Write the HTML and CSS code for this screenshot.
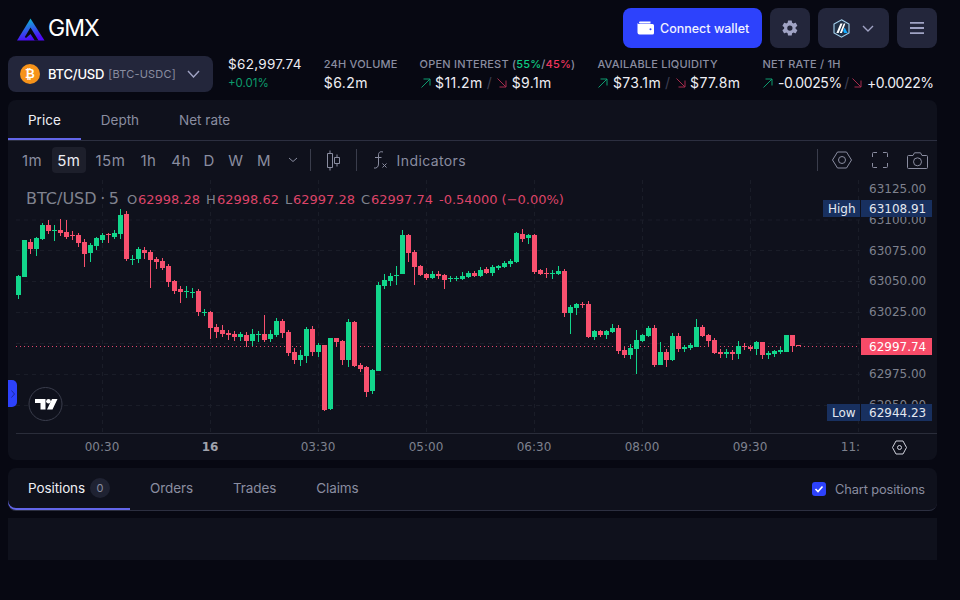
FILE: index.html
```html
<!DOCTYPE html>
<html lang="en">
<head>
<meta charset="UTF-8" />
<meta name="viewport" content="width=device-width, initial-scale=1" />
<title>GMX - BTC/USD</title>
<link rel="stylesheet" href="styles.css">
</head>
<body>

<div class="page">

  <header class="topbar">
    <div class="brand">
      <svg class="brand-logo" width="30" height="24" viewBox="0 0 30 24">
        <defs>
          <linearGradient id="logoFill" x1="0" y1="0" x2="0.3" y2="1">
            <stop offset="0" stop-color="#03d1cf"/>
            <stop offset="1" stop-color="#4e09f8"/>
          </linearGradient>
        </defs>
        <path fill="url(#logoFill)" d="M14.5 1.5 L28.5 23.5 H1 Z"/>
        <path fill="#07080f" d="M14.5 10.5 L22.5 23.5 H18.8 L14.5 17 L10 21 L8.8 20 Z"/>
      </svg>
      <span class="brand-name">GMX</span>
    </div>
    <div class="actions">
      <button class="connect-btn">
        <svg width="18" height="14" viewBox="0 0 18 14"><path fill="#fff" d="M3 0.5 H13.5 V2.5 H3 A1 1 0 0 1 3 0.5Z"/><path fill="#fff" fill-rule="evenodd" d="M2.5 3 H15.5 A1.5 1.5 0 0 1 17 4.5 V12 A1.5 1.5 0 0 1 15.5 13.5 H2.5 A2 2 0 0 1 0.5 11.5 V2 A2 1 0 0 0 2.5 3Z M13.5 7.3 A1 1 0 1 0 13.5 9.3 A1 1 0 1 0 13.5 7.3Z"/></svg>
        Connect wallet
      </button>
      <button class="icon-btn">
        <svg width="18" height="18" viewBox="0 0 24 24"><path fill="#a0a3c4" d="M19.4 13c.04-.32.1-.66.1-1s-.06-.68-.1-1l2.15-1.67c.2-.15.25-.42.12-.64l-2.04-3.53c-.12-.22-.39-.3-.61-.22l-2.54 1.02c-.53-.4-1.1-.74-1.73-1l-.38-2.7A.5.5 0 0 0 13.87 2h-4.08a.5.5 0 0 0-.5.42l-.38 2.7c-.63.26-1.2.6-1.73 1L4.64 5.1c-.23-.08-.5 0-.61.22L1.99 8.85c-.13.22-.08.49.12.64L4.26 11c-.04.32-.1.66-.1 1s.06.68.1 1l-2.15 1.67c-.2.15-.25.42-.12.64l2.04 3.53c.12.22.38.3.61.22l2.54-1.02c.53.4 1.1.74 1.73 1l.38 2.7c.04.24.25.42.5.42h4.08c.25 0 .46-.18.5-.42l.38-2.7c.63-.26 1.2-.6 1.73-1l2.54 1.02c.22.08.49 0 .61-.22l2.04-3.53c.13-.22.08-.49-.12-.64L19.4 13ZM11.83 15.5a3.5 3.5 0 1 1 0-7 3.5 3.5 0 0 1 0 7Z"/></svg>
      </button>
      <button class="icon-btn network-btn">
        <svg width="17" height="19" viewBox="0 0 17 19">
          <path fill="#213147" stroke="#a8d4f0" stroke-width="1.1" d="M8.5 0.8 L16 5 V14 L8.5 18.2 L1 14 V5 Z"/>
          <path fill="#fff" d="M3.4 14 L7.4 4.6 H9.6 L5.6 14 Z M6.8 14 L10.8 4.6 H12.4 L8.9 14 Z"/>
          <path fill="#12aaff" d="M11.6 8.4 L14.6 14 H11.2 L10.2 11.8 Z"/>
        </svg>
        <svg width="12" height="7" viewBox="0 0 12 7"><path fill="none" stroke="#a0a3c4" stroke-width="1.4" d="M1 1 L6 6 L11 1"/></svg>
      </button>
      <button class="icon-btn">
        <svg width="16" height="14" viewBox="0 0 16 14"><path fill="#a0a3c4" d="M1 1 H15 V2.8 H1Z M1 6.1 H15 V7.9 H1Z M1 11.2 H15 V13 H1Z"/></svg>
      </button>
    </div>
  </header>

  <section class="ticker">
    <button class="market-select">
      <span class="btc-coin">₿</span>
      <span class="market-name">BTC/USD</span>
      <span class="market-pool">[BTC-USDC]</span>
      <svg class="market-chevron" width="13" height="8" viewBox="0 0 13 8"><path fill="none" stroke="#a0a3c4" stroke-width="1.4" d="M1 1 L6.5 7 L12 1"/></svg>
    </button>
    <div class="stat">
      <div class="stat-price">$62,997.74</div>
      <div class="stat-change">+0.01%</div>
    </div>
    <div class="stat">
      <div class="stat-label">24H VOLUME</div>
      <div class="stat-value">$6.2m</div>
    </div>
    <div class="stat">
      <div class="stat-label">OPEN INTEREST (<span class="up">55%</span>/<span class="down">45%</span>)</div>
      <div class="stat-value">
        <svg class="arrow" width="12" height="12" viewBox="0 0 12 12"><path class="arrow-up" d="M1.5 10.5 L10 2 M3.5 2 H10 V8.5"/></svg>
        $11.2m <span class="slash">/</span>
        <svg class="arrow" width="12" height="12" viewBox="0 0 12 12"><path class="arrow-down" d="M1.5 1.5 L10 10 M3.5 10 H10 V3.5"/></svg>
        $9.1m
      </div>
    </div>
    <div class="stat">
      <div class="stat-label">AVAILABLE LIQUIDITY</div>
      <div class="stat-value">
        <svg class="arrow" width="12" height="12" viewBox="0 0 12 12"><path class="arrow-up" d="M1.5 10.5 L10 2 M3.5 2 H10 V8.5"/></svg>
        $73.1m <span class="slash">/</span>
        <svg class="arrow" width="12" height="12" viewBox="0 0 12 12"><path class="arrow-down" d="M1.5 1.5 L10 10 M3.5 10 H10 V3.5"/></svg>
        $77.8m
      </div>
    </div>
    <div class="stat">
      <div class="stat-label">NET RATE / 1H</div>
      <div class="stat-value rate-value">
        <svg class="arrow" width="12" height="12" viewBox="0 0 12 12"><path class="arrow-up" d="M1.5 10.5 L10 2 M3.5 2 H10 V8.5"/></svg>
        -0.0025% <span class="slash">/</span>
        <svg class="arrow" width="12" height="12" viewBox="0 0 12 12"><path class="arrow-down" d="M1.5 1.5 L10 10 M3.5 10 H10 V3.5"/></svg>
        +0.0022%
      </div>
    </div>
  </section>

  <section class="panel chart-panel">
    <div class="tabs">
      <div class="tab active">Price</div>
      <div class="tab">Depth</div>
      <div class="tab">Net rate</div>
    </div>

    <div class="toolbar">
      <span class="interval">1m</span>
      <span class="interval selected">5m</span>
      <span class="interval">15m</span>
      <span class="interval">1h</span>
      <span class="interval">4h</span>
      <span class="interval long first-long">D</span>
      <span class="interval long">W</span>
      <span class="interval long">M</span>
      <svg class="interval-more" width="10" height="6" viewBox="0 0 10 6"><path fill="none" stroke="#8a8da0" d="M1 1 L5 4.5 L9 1"/></svg>
      <span class="tool-sep"></span>
      <svg class="tool-candles" width="14" height="21" viewBox="0 0 14 21"><path fill="none" stroke="#8a8da0" d="M4 0.5 V3.5 M4 17.5 V20.5 M1.5 3.5 H6.5 V17.5 H1.5Z M11 4.5 V7.5 M11 13.5 V16.5 M8.5 7.5 H13.5 V13.5 H8.5Z" transform="translate(-1 0)"/></svg>
      <span class="tool-sep"></span>
      <svg class="tool-fx" width="14" height="18" viewBox="0 0 14 18"><path fill="none" stroke="#8a8da0" d="M10 1 C6.5 0 5.5 2 5.5 4 V13 C5.5 16 3.5 17.5 1 17 M2 6.5 H8.5 M9.5 12.5 L13.5 16.5 M13.5 12.5 L9.5 16.5"/></svg>
      <span class="tool-label">Indicators</span>
      <span class="tool-spacer"></span>
      <span class="tool-sep"></span>
      <svg class="tool-hex" width="20" height="18" viewBox="0 0 20 18"><path fill="none" stroke="#8a8da0" d="M5.5 1 H14.5 L19.5 9 L14.5 17 H5.5 L0.5 9 Z"/><circle cx="10" cy="9" r="3.5" fill="none" stroke="#8a8da0"/></svg>
      <svg class="tool-full" width="16" height="16" viewBox="0 0 16 16"><path fill="none" stroke="#8a8da0" d="M0.5 5 V1.5 A1 1 0 0 1 1.5 0.5 H5 M11 0.5 H14.5 A1 1 0 0 1 15.5 1.5 V5 M15.5 11 V14.5 A1 1 0 0 1 14.5 15.5 H11 M5 15.5 H1.5 A1 1 0 0 1 0.5 14.5 V11"/></svg>
      <svg class="tool-camera" width="21" height="17" viewBox="0 0 21 17"><path fill="none" stroke="#8a8da0" d="M1.5 3.5 H6 L7.5 0.8 H13.5 L15 3.5 H19.5 A1 1 0 0 1 20.5 4.5 V15.5 A1 1 0 0 1 19.5 16.5 H1.5 A1 1 0 0 1 0.5 15.5 V4.5 A1 1 0 0 1 1.5 3.5Z"/><circle cx="10.5" cy="9.8" r="4" fill="none" stroke="#8a8da0"/></svg>
    </div>

    <div class="chart-canvas">
      <svg class="chart-svg" width="929" height="280" viewBox="8 180 929 280">
        <!-- grid -->
        <path class="grid" d="M16 220 H860 M16 250.5 H860 M16 281.5 H860 M16 312.5 H860 M16 343.5 H860 M16 374.5 H860 M16 405.5 H860"/>
        <path class="grid" d="M102.5 180 V433 M210.5 180 V433 M318.5 180 V433 M426.5 180 V433 M534.5 180 V433 M642.5 180 V433 M750.5 180 V433 M858.5 180 V433"/>
        <path class="last-line" d="M16 346.5 H860"/>

        <g id="candles"></g>

        <!-- legend -->
        <text class="legend-title" x="26" y="204">BTC/USD · 5</text>
        <text class="legend" y="204">
          <tspan class="legend-key" x="127">O</tspan><tspan class="legend-val" x="138">62998.28</tspan>
          <tspan class="legend-key" x="206">H</tspan><tspan class="legend-val" x="217">62998.62</tspan>
          <tspan class="legend-key" x="285">L</tspan><tspan class="legend-val" x="293">62997.28</tspan>
          <tspan class="legend-key" x="361">C</tspan><tspan class="legend-val" x="371">62997.74</tspan>
          <tspan class="legend-val" x="439">-0.54000 (−0.00%)</tspan>
        </text>

        <!-- price scale -->
        <g class="scale">
          <text x="869" y="193">63125.00</text>
          <text x="869" y="224">63100.00</text>
          <text x="869" y="255">63075.00</text>
          <text x="869" y="285">63050.00</text>
          <text x="869" y="316">63025.00</text>
          <text x="869" y="378">62975.00</text>
          <text x="869" y="409">62950.00</text>
        </g>

        <rect class="tag-box" x="823" y="200" width="37" height="17"/>
        <rect class="tag-box" x="861" y="200" width="71" height="17"/>
        <text class="tag-text" x="828" y="213">High</text>
        <text class="tag-text" x="869" y="213">63108.91</text>

        <rect class="tag-box" x="827" y="404" width="33" height="17"/>
        <rect class="tag-box" x="861" y="404" width="71" height="17"/>
        <text class="tag-text" x="832" y="417">Low</text>
        <text class="tag-text" x="869" y="417">62944.23</text>

        <rect class="last-box" x="861" y="338" width="71" height="17"/>
        <text class="tag-text last-text" x="869" y="351">62997.74</text>

        <!-- time axis -->
        <path class="axis" d="M16 433.5 H937"/>
        <g class="scale time-scale">
          <text x="102" y="451">00:30</text>
          <text class="day" x="210" y="451">16</text>
          <text x="318" y="451">03:30</text>
          <text x="426" y="451">05:00</text>
          <text x="534" y="451">06:30</text>
          <text x="642" y="451">08:00</text>
          <text x="750" y="451">09:30</text>
          <text x="850.5" y="451">11:</text>
        </g>
        <path class="axis-icon" d="M896 441 H903 L906.5 447.5 L903 454 H896 L892.5 447.5 Z"/>
        <circle class="axis-icon" cx="899.5" cy="447.5" r="2"/>

        <!-- tradingview badge -->
        <circle class="tv-circle" cx="45.5" cy="404" r="16.5"/>
        <path class="tv-mark" d="M35 399 H45.5 V409.5 H40.5 V403 H35 Z M52 399 H57.5 L52.5 409.5 H47 Z"/>
        <circle class="tv-mark" cx="48.5" cy="401.2" r="2.3"/>
      </svg>
      <div class="side-handle">
        <svg width="4" height="8" viewBox="0 0 4 8"><path fill="none" stroke="#1c2a9c" d="M0.5 0.5 L3.5 4 L0.5 7.5"/></svg>
      </div>
    </div>
  </section>

  <section class="panel positions-panel">
    <div class="tabs bottom-tabs">
      <div class="tab active">Positions <span class="count">0</span></div>
      <div class="tab">Orders</div>
      <div class="tab">Trades</div>
      <div class="tab">Claims</div>
      <label class="chart-toggle">
        <span class="check">
          <svg width="10" height="8" viewBox="0 0 10 8"><path fill="none" stroke="#fff" stroke-width="1.6" d="M1.5 4 L4 6.5 L8.5 1.5"/></svg>
        </span>
        Chart positions
      </label>
    </div>
  </section>

  <div class="panel empty-panel"></div>

</div>

<script src="chart.js"></script>
</body>
</html>
```

FILE: styles.css
```css
* { box-sizing: border-box; }
html, body { height: 100%; }
body { margin: 0; height: 600px; overflow: hidden; background: #070812; color: #fff; font-family: Inter, "Noto Sans", sans-serif; font-size: 14px; }
button { font-family: inherit; border: none; color: inherit; padding: 0; }

.page { padding: 0 23px 0 8px; }

.topbar { display: flex; justify-content: space-between; height: 56px; padding-top: 8px; }
.brand { display: flex; align-items: center; gap: 2px; padding-left: 8px; height: 40px; }
.brand-name { font-size: 23px; font-weight: 400; letter-spacing: -1px; color: #fff; }
.brand-logo { display: block; margin-top: 1px; }
.actions { display: flex; gap: 8px; height: 40px; }
.connect-btn { display: flex; align-items: center; gap: 5px; width: 139px; padding-left: 14px; background: #2d42fc; border-radius: 8px; font-size: 12.5px; font-weight: 500; color: #f0f1ff; white-space: nowrap; }
.icon-btn { display: flex; align-items: center; justify-content: center; width: 40px; background: #23263b; border-radius: 8px; }
.network-btn { width: 71px; gap: 12px; }

.ticker { display: flex; align-items: center; height: 36px; gap: 22px; margin-bottom: 8px; }
.market-select { display: flex; align-items: center; flex: none; width: 205px; height: 36px; margin-right: -7px; padding: 0 13px 0 12px; background: #23263b; border-radius: 8px; white-space: nowrap; }
.btc-coin { display: flex; align-items: center; justify-content: center; flex: none; width: 20px; height: 20px; margin-right: 8px; border-radius: 50%; background: #f7931a; font-family: "DejaVu Sans", sans-serif; font-size: 12px; font-weight: 700; color: #fff; }
.market-name { font-size: 13px; font-weight: 500; letter-spacing: -0.2px; }
.market-pool { margin-left: 4px; font-size: 11px; letter-spacing: 0.2px; color: #8a8da0; }
.market-chevron { margin-left: auto; }
.stat { white-space: nowrap; }
.stat-price { font-size: 13.5px; line-height: 18px; letter-spacing: 0.3px; color: #eeeef4; margin-top: -1px; }
.stat-change { font-size: 11.5px; line-height: 20px; color: #0c9c6c; }
.stat-label { font-size: 11px; line-height: 16px; font-weight: 500; letter-spacing: 0.2px; color: #8a8da0; }
.stat-value { display: flex; align-items: center; gap: 3.5px; font-size: 14px; line-height: 20px; letter-spacing: 0.4px; color: #eeeef4; margin-top: 1px; }
.stat-value .slash { color: #3c3f52; margin: 0 0.5px; }
.rate-value { letter-spacing: -0.4px; }
.rate-value .slash { margin: 0 -1px; }
.up { color: #0ecc83; }
.down { color: #f0365f; }
.arrow path { fill: none; stroke-width: 1; }
.arrow-up { stroke: #0e9c70; }
.arrow-down { stroke: #a52b4c; }

.panel { background: #0f111c; border-radius: 8px; }
.chart-panel { height: 360px; overflow: hidden; }
.tabs { display: flex; height: 41px; border-bottom: 1px solid #2c2f40; }
.tab { display: flex; align-items: center; height: 40px; padding: 0 20px; font-size: 13.5px; color: #8a8da0; }
.tab.active { color: #eeeef4; box-shadow: inset 0 -2px 0 #6366e8; }

.toolbar { display: flex; align-items: center; height: 39px; padding: 0 0 1px 8.5px; color: #8a8da0; }
.interval { display: flex; align-items: center; justify-content: center; height: 26px; padding: 0 5.5px; margin-right: 4px; border-radius: 4px; font-size: 15px; letter-spacing: 0.5px; }
.interval.long { padding: 0 5px; margin-right: 3.5px; }
.interval.first-long { margin-left: -2px; }
.interval.selected { background: #1d1f2b; color: #eeeef4; }
.interval-more { margin: 0 12px 0 8px; }
.tool-sep { width: 1px; height: 22px; background: #3a3d4c; }
.tool-candles { margin: 0 15px 0 16px; }
.tool-fx { margin-left: 16px; }
.tool-label { margin-left: 10px; font-size: 14px; letter-spacing: 0.4px; }
.tool-spacer { flex: 1; }
.tool-hex { margin: 0 20px 0 14px; }
.tool-full { margin-right: 19px; }
.tool-camera { margin-right: 9px; }

.chart-canvas { position: relative; height: 280px; }
.chart-svg { display: block; font-family: "DejaVu Sans", sans-serif; }
.grid { fill: none; stroke: #1a1d28; stroke-width: 1; stroke-dasharray: 4 4; }
.last-line { fill: none; stroke: #e0466b; stroke-width: 1; stroke-dasharray: 1 3; }
.axis { fill: none; stroke: #2a2d3a; stroke-width: 1; }
.axis-icon { fill: none; stroke: #d0d2dc; stroke-width: 1; }
.legend-title { font-size: 16px; fill: #80838f; word-spacing: -1.5px; }
.legend { font-size: 13px; }
.legend-key { fill: #80838f; }
.legend-val { fill: #dc4468; }
.scale text { font-size: 12px; fill: #7e818e; }
.time-scale text { text-anchor: middle; }
.time-scale .day { font-weight: 700; fill: #a0a3ac; }
.tag-box { fill: #18305f; }
.tag-text { font-size: 12px; fill: #e4e8f0; }
.last-box { fill: #f84b68; }
.last-text { fill: #fff; }
.tv-circle { fill: #0f111c; stroke: #3a3d4c; stroke-width: 1; }
.tv-mark { fill: #fff; }
.candle-up { fill: #12d68b; }
.candle-down { fill: #f8506e; }
.side-handle { position: absolute; left: 0; top: 200px; display: flex; align-items: center; justify-content: center; width: 9px; height: 27px; background: #2d42fc; border-radius: 0 5px 5px 0; }

.positions-panel { height: 43px; margin-top: 8px; }
.bottom-tabs { height: 43px; border-radius: 0 0 8px 8px; align-items: flex-start; }
.bottom-tabs .tab { height: 42px; padding-bottom: 2px; letter-spacing: -0.1px; }
.bottom-tabs .tab.active { border-radius: 0 0 0 8px; }
.count { display: flex; align-items: center; justify-content: center; width: 20px; height: 20px; margin-left: 5px; border-radius: 50%; background: #1f2232; font-size: 11px; color: #8a8da0; }
.chart-toggle { display: flex; align-items: center; gap: 9px; margin-left: auto; height: 42px; padding-right: 12px; font-size: 12.8px; color: #8a8da0; letter-spacing: -0.1px; }
.check { display: flex; align-items: center; justify-content: center; width: 14px; height: 14px; border-radius: 3px; background: #2d42fc; }

.empty-panel { height: 42px; margin-top: 7px; border-radius: 0; }
```

FILE: chart.js
```js
// candles: [up, wickTop, bodyTop, bodyBottom, wickBottom], y in thirds of a pixel from the top of the chart
const candles = [
  [1,285,288,345,356],[1,180,180,290,290],[0,178,186,207,222],[1,172,174,207,228],[1,130,134,178,180],
  [0,120,135,154,162],[1,135,150,153,182],[0,117,150,160,168],[0,120,156,172,177],[0,152,164,167,180],
  [0,158,165,189,200],[0,178,185,222,260],[1,190,195,219,246],[1,170,174,198,210],[1,158,165,180,188],
  [0,158,162,165,188],[1,150,159,172,177],[1,86,105,162,177],[0,92,102,237,243],[1,225,237,240,255],
  [1,200,207,237,249],[0,200,210,219,237],[0,210,216,240,324],[0,230,237,246,267],[0,235,243,264,270],
  [0,252,258,306,320],[0,300,303,333,342],[0,318,327,336,369],[1,318,333,336,354],[1,324,336,339,354],
  [0,327,333,396,408],[1,387,396,399,408],[0,393,397,444,477],[0,432,441,456,474],[0,435,450,462,471],
  [0,450,459,465,480],[0,453,462,471,483],[1,456,462,471,483],[0,456,465,483,500],[1,447,462,483,497],
  [1,453,462,465,486],[0,405,462,480,486],[1,450,462,477,486],[1,414,423,465,471],[0,417,423,459,474],
  [0,450,456,519,528],[0,504,516,540,552],[1,510,525,540,558],[1,441,447,528,549],[0,438,447,516,528],
  [1,490,495,516,530],
  [0,495,495,690,693],[1,474,474,687,690],[0,474,474,486,500],[0,480,483,540,555],[1,418,426,540,560],
  [0,423,426,558,562],[0,548,555,567,576],[0,558,561,636,650],[1,567,570,633,642],[1,306,315,573,573],
  [1,282,300,318,327],[1,278,288,303,318],[1,258,285,288,315],[1,150,165,282,282],[0,163,165,219,246],
  [0,210,215,261,315],[0,255,258,285,288],[0,280,282,294,300],[1,273,282,294,297],[0,273,282,288,297],
  [0,282,285,300,327],[1,288,294,297,306],[1,288,294,297,303],[1,276,288,297,300],[1,273,279,291,294],
  [0,273,279,288,291],[1,262,270,288,291],[0,262,268,279,282],[1,255,261,279,288],[1,255,258,264,270],
  [1,243,249,261,264],[1,237,243,252,261],[1,156,160,246,249],[0,147,162,178,186],[1,162,165,174,192],
  [0,162,165,276,282],[0,267,270,282,285],[0,265,279,282,294],[1,270,279,282,297],[1,258,273,282,285],
  [0,268,273,399,411],[1,375,381,399,462],[1,369,372,384,405],[0,366,372,375,384],[0,363,372,471,474],
  [1,450,453,471,480],[0,450,453,465,471],[1,450,453,465,477],[1,432,444,456,460],[0,435,444,513,522],
  [0,500,510,525,534],[1,492,504,525,537],[1,450,480,507,582],
  [1,462,465,483,485],[1,438,444,468,470],[0,435,444,555,560],[1,487,516,555,555],[0,507,516,540,560],
  [1,460,468,540,543],[0,460,468,507,516],[1,495,501,507,516],[1,490,495,504,510],[1,418,441,501,501],
  [0,435,441,468,470],[0,462,465,483,500],[0,475,480,519,522],[0,507,516,522,534],[1,507,516,522,534],
  [0,510,516,522,540],[1,483,498,522,537],[0,490,498,501,510],[0,495,501,507,513],[1,483,486,507,525],
  [0,486,486,525,537],[1,513,519,525,537],[1,510,513,522,530],[1,500,510,516,522],[1,465,465,516,516],
  [0,465,465,498,516],[0,496,496,498,498]
];

const SVG_NS = 'http://www.w3.org/2000/svg';
const group = document.getElementById('candles');

function addRect(x, y, w, h, cls) {
  const r = document.createElementNS(SVG_NS, 'rect');
  r.setAttribute('x', x);
  r.setAttribute('y', y);
  r.setAttribute('width', w);
  r.setAttribute('height', Math.max(h, 1));
  r.setAttribute('class', cls);
  group.appendChild(r);
}

candles.forEach((c, i) => {
  const cx = 18 + i * 6;
  const toY = v => Math.round(180 + v / 3);
  const cls = c[0] ? 'candle-up' : 'candle-down';
  addRect(cx, toY(c[1]), 1, toY(c[4]) - toY(c[1]), cls);
  addRect(cx - 2, toY(c[2]), 5, toY(c[3]) - toY(c[2]), cls);
});
```
